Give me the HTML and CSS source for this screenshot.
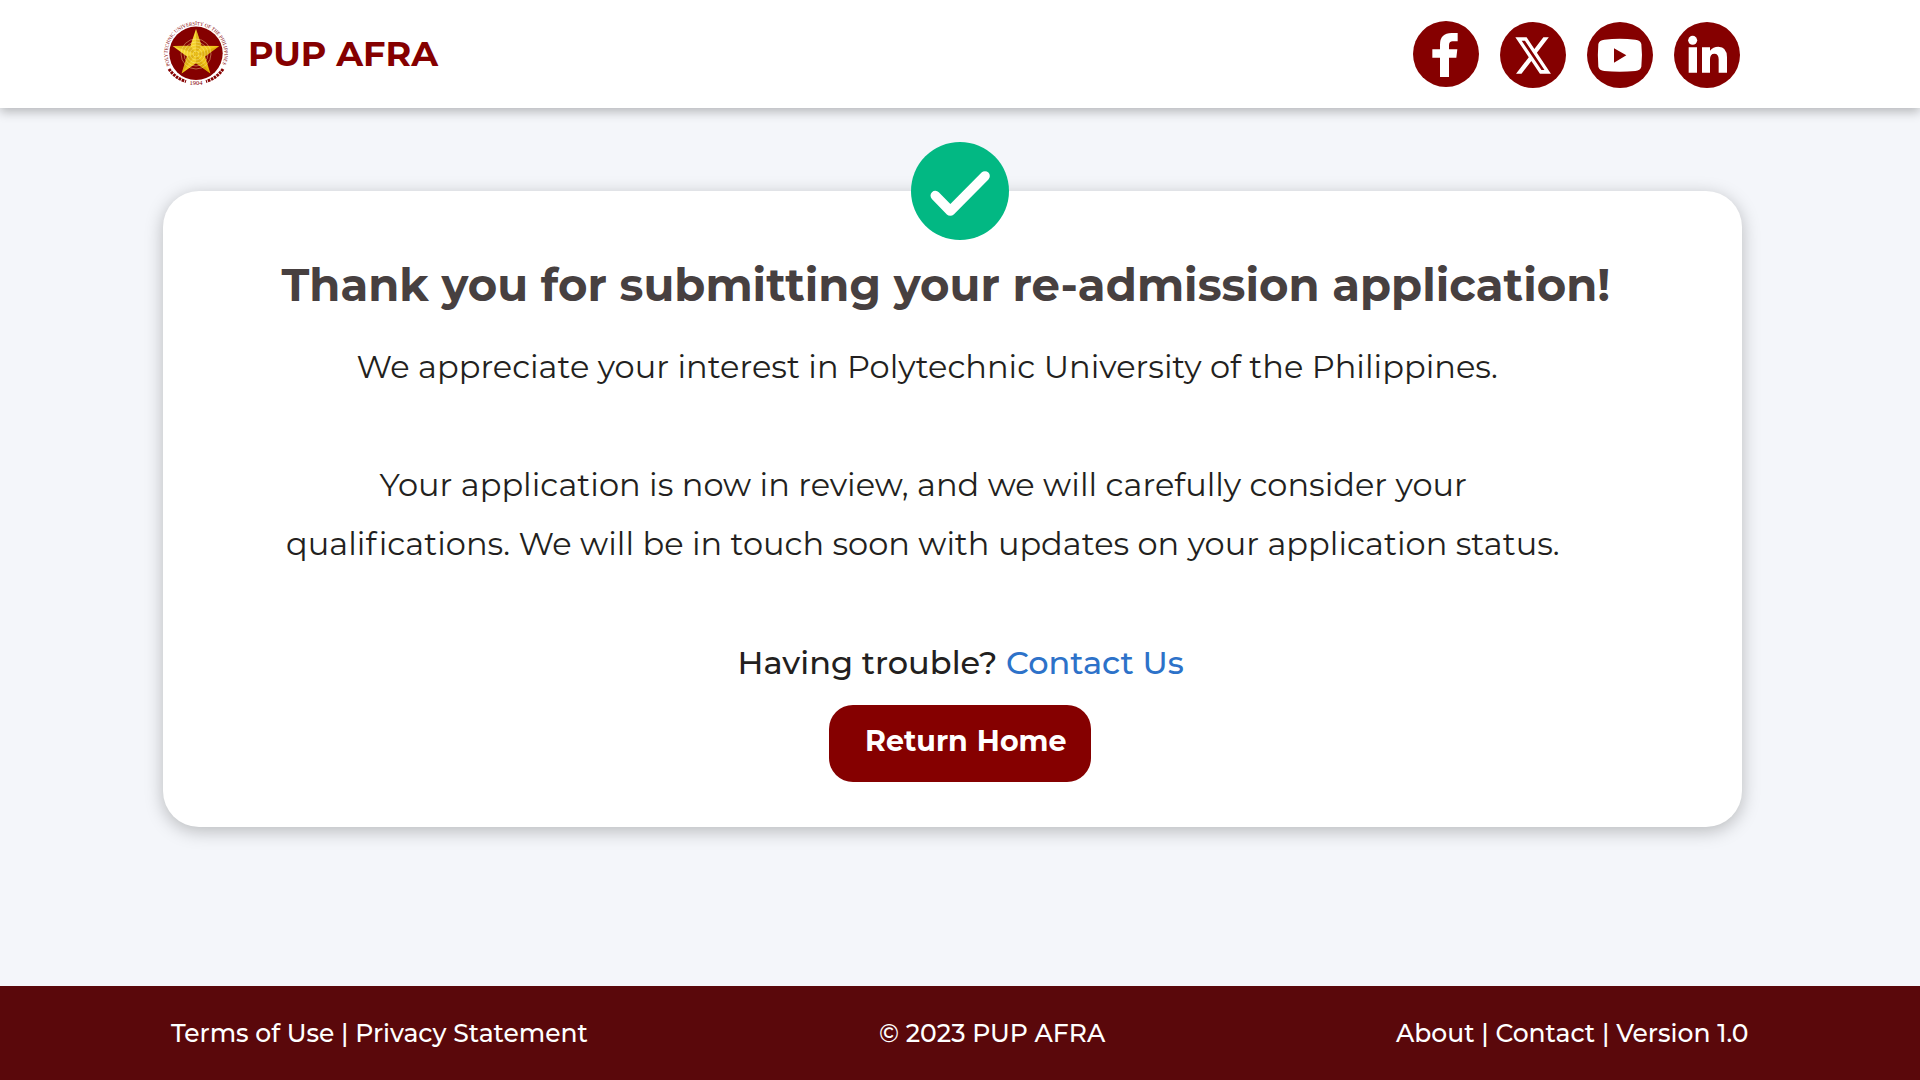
FILE: index.html
```html
<!DOCTYPE html>
<html lang="en">
<head>
<meta charset="utf-8">
<title>PUP AFRA</title>
<link rel="stylesheet" href="styles.css">
</head>
<body>
<header class="header">
  <svg class="seal" viewBox="0 0 66 66" aria-hidden="true">
    <defs>
      <path id="arc" d="M7.2 45.5A28.4 28.4 0 1 1 58.8 45.5"/>
      <linearGradient id="gold" x1="0" y1="0" x2="1" y2="1">
        <stop offset="0" stop-color="#ffe94a"/><stop offset="1" stop-color="#e6b000"/>
      </linearGradient>
    </defs>
    <circle cx="33" cy="33.3" r="26.7" fill="#850000"/>
    <text class="seal-text"><textPath href="#arc" textLength="112" lengthAdjust="spacingAndGlyphs">POLYTECHNIC UNIVERSITY OF THE PHILIPPINES</textPath></text>
    <path fill="url(#gold)" d="M33 9l5.6 16.8 17.7.1-14.2 10.6 5.3 17L33 43.2 18.6 53.5l5.3-17L9.7 25.9l17.7-.1z"/>
    <path fill="#c48a00" opacity=".4" d="M33 9v25l5.6-8.2zM56.3 25.9L33 34l9.1 2.5zM47.4 53.5L33 34v9.2zM18.6 53.5L33 34l-9.1 2.5zM9.7 25.9L33 34l-5.6-8.2z"/>
    <g fill="none" stroke="#fff2a0" stroke-width=".7" opacity=".6">
      <circle cx="33" cy="34" r="3"/><circle cx="33" cy="34" r="6"/><circle cx="33" cy="34" r="9"/><circle cx="33" cy="34" r="12"/><circle cx="33" cy="34" r="15"/>
    </g>
    <g fill="none" stroke="#850000" stroke-width="3" stroke-dasharray="2.6 .8">
      <path d="M6 49Q12 58 23 61.5"/><path d="M60 49Q54 58 43 61.5"/>
    </g>
    <text class="seal-text seal-year" x="33" y="65" text-anchor="middle">1904</text>
  </svg>
  <span class="brand">PUP AFRA</span>
  <nav class="social">
    <a class="social-link raised" aria-label="Facebook"><svg viewBox="0 0 198 198"><path d="M134 36V61H119Q108 61 108 73V85H133L130 110H108V168H81V110H58V85H81V71Q81 36 116 36Z"/></svg></a>
    <a class="social-link" aria-label="X"><svg viewBox="0 0 198 198"><path transform="translate(39.8 33.4) scale(4.95 5.59)" d="M18.244 2.25h3.308l-7.227 8.26 8.502 11.24H16.17l-5.214-6.817L4.99 21.75H1.68l7.73-8.835L1.254 2.25H8.08l4.713 6.231zm-1.161 17.52h1.833L7.084 4.126H5.117z"/></svg></a>
    <a class="social-link" aria-label="YouTube"><svg viewBox="0 0 198 198"><path fill-rule="evenodd" d="M52 53Q98 48 145 53Q160 54 163 66Q167 100 163 134Q160 145 145 147Q98 152 52 147Q37 145 34 134Q31 100 34 66Q37 54 52 53ZM81 79V122L118 100Z"/></svg></a>
    <a class="social-link" aria-label="LinkedIn"><svg viewBox="0 0 198 198"><circle cx="56" cy="55" r="13.5"/><path d="M44 76H69V152H44ZM84 76H108V86Q117 74 133 74Q159 74 159 106V152H134V112Q134 95 121 95Q108 95 108 112V152H84Z"/></svg></a>
  </nav>
</header>
<main class="main">
  <section class="card">
    <svg class="check" viewBox="0 0 294 294" aria-hidden="true"><circle cx="147" cy="147" r="147"/><path d="M73 161L118 207L222 102"/></svg>
    <h1 class="title">Thank you for submitting your re-admission application!</h1>
    <p class="line line-intro">We appreciate your interest in Polytechnic University of the Philippines.</p>
    <p class="line line-review">Your application is now in review, and we will carefully consider your</p>
    <p class="line line-status">quali<span class="loose">f</span>ications. We will be in touch soon with updates on your application status.</p>
    <p class="line line-help">Having trouble? <a class="contact">Contact Us</a></p>
    <button class="home">Return Home</button>
  </section>
</main>
<footer class="footer">
  <span>Terms of Use | Privacy Statement</span>
  <span>© 2023 PUP AFRA</span>
  <span>About | Contact | Version 1.0</span>
</footer>
</body>
</html>
```
FILE: styles.css
```css
* { box-sizing: border-box; }

body {
  margin: 0;
  height: 1080px;
  display: flex;
  flex-direction: column;
  background: #f4f6fa;
  font-family: Montserrat, Inter, "Liberation Sans", sans-serif;
  white-space: nowrap;
  overflow: hidden;
}

.header {
  flex: none;
  height: 108px;
  padding: 0 180px 0 163px;
  display: flex;
  align-items: center;
  background: #fff;
  box-shadow: 0 4px 10px rgba(0, 0, 0, .25);
}

.seal { width: 66px; height: 66px; margin-bottom: 2px; overflow: visible; }
.seal-text { font: 400 5.2px "Liberation Serif", serif; fill: #850000; }
.seal-year { font-size: 6.5px; }

.brand {
  margin-left: 19px;
  font-size: 35px;
  line-height: 36px;
  font-weight: 700;
  color: #850000;
}

.social {
  margin: 2px 0 0 auto;
  display: flex;
  gap: 21px;
}
.social-link {
  width: 66px;
  height: 66px;
  border-radius: 50%;
  background: #850000;
}
.social-link svg { display: block; width: 66px; height: 66px; fill: #fff; }
.raised { margin-top: -1px; }

.main { flex: 1; padding: 83px 178px 0 163px; }

.card {
  position: relative;
  height: 636px;
  padding-top: 64px;
  border-radius: 36px;
  background: #fff;
  box-shadow: 0 4px 18px rgba(0, 0, 0, .25);
}

.check {
  position: absolute;
  top: -49px;
  left: 748px;
  width: 98px;
  height: 98px;
  fill: #02b883;
}
.check path {
  fill: none;
  stroke: #fff;
  stroke-width: 29;
  stroke-linecap: round;
  stroke-linejoin: round;
}

.title {
  margin: 0 0 22px 118.5px;
  font-size: 45px;
  line-height: 60px;
  font-weight: 700;
  color: #474040;
}

.line {
  margin: 0;
  font-size: 32px;
  line-height: 59px;
  font-weight: 400;
  font-variant-ligatures: none;
  letter-spacing: .02px;
  color: #231f20;
}
.line-intro { margin: 0 0 59px 193.5px; }
.line-review { margin-left: 216.5px; }
.line-status { margin: 0 0 60px 123px; }
.line-help { margin: 0 0 13px 574.5px; font-weight: 500; }
.loose { letter-spacing: 2.4px; }
.contact { color: #2d72c9; }

.home {
  display: block;
  width: 262px;
  height: 77px;
  margin-left: 666px;
  padding: 0 0 5px 36px;
  border: 0;
  border-radius: 24px;
  background: #850000;
  color: #fff;
  font: 700 28.5px/72px Montserrat, Inter, "Liberation Sans", sans-serif;
  word-spacing: 1px;
  text-align: left;
}

.footer {
  flex: none;
  height: 94px;
  padding-left: 171px;
  display: grid;
  grid-template-columns: 708px 517px auto;
  background: #5a080b;
  color: #fff;
  font-size: 25px;
  font-weight: 500;
  line-height: 94px;
}
```
